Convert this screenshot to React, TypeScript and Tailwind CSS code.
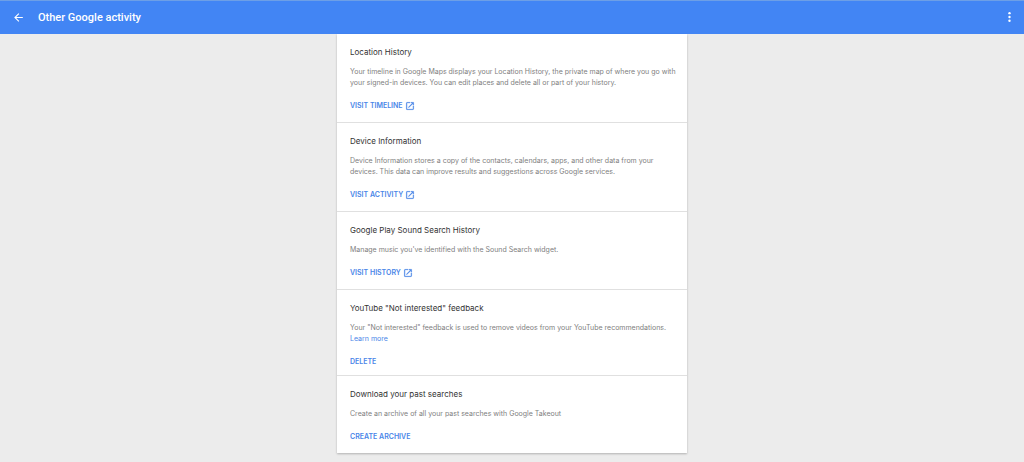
import React from "react";

type Item = {
  title: string;
  text: string;
  action: string;
  external?: boolean;
  learnMore?: boolean;
};

const items: Item[] = [
  {
    title: "Location History",
    text: "Your timeline in Google Maps displays your Location History, the private map of where you go with your signed-in devices. You can edit places and delete all or part of your history.",
    action: "Visit timeline",
    external: true,
  },
  {
    title: "Device Information",
    text: "Device Information stores a copy of the contacts, calendars, apps, and other data from your devices. This data can improve results and suggestions across Google services.",
    action: "Visit activity",
    external: true,
  },
  {
    title: "Google Play Sound Search History",
    text: "Manage music you've identified with the Sound Search widget.",
    action: "Visit history",
    external: true,
  },
  {
    title: 'YouTube "Not interested" feedback',
    text: 'Your "Not interested" feedback is used to remove videos from your YouTube recommendations.',
    action: "Delete",
    learnMore: true,
  },
  {
    title: "Download your past searches",
    text: "Create an archive of all your past searches with Google Takeout",
    action: "Create archive",
  },
];

function OpenInNew() {
  return (
    <svg viewBox="0 0 24 24" className="size-[10px]" fill="currentColor" stroke="currentColor" strokeWidth="0.5" aria-hidden="true">
      <path d="M19 19H5V5h7V3H5a2 2 0 0 0-2 2v14a2 2 0 0 0 2 2h14c1.100 0 2-.9 2-2v-7h-2v7zM14 3v2h3.590l-9.830 9.830 1.410 1.410L19 6.410V10h2V3h-7z" />
    </svg>
  );
}

function ActivityItem({ item }: { item: Item }) {
  const actionClass = "inline-flex h-3 items-center gap-0.5 text-[7px] leading-3 font-semibold uppercase text-[#4a86e8]";
  return (
    <section className={`border-b border-[#e0e0e0] pt-3 pr-2 pl-[13px] last:border-b-0 last:pb-[10px] ${item.external ? "pb-[10px]" : "pb-[7px]"}`}>
      <h2 className="text-[8px] leading-3 text-[#333333]">{item.title}</h2>
      <p className="mt-2 text-[7px] leading-[11px] text-[#808080]">
        {item.text}
        {item.learnMore && <a href="#learn-more" className="block w-fit text-[#4a86e8]">Learn more</a>}
      </p>
      <div className="mt-3 flex">
        {item.external ? (
          <a href="#visit" className={actionClass}>{item.action}<OpenInNew /></a>
        ) : (
          <button type="button" className={actionClass}>{item.action}</button>
        )}
      </div>
    </section>
  );
}

export default function App() {
  return (
    <div className="min-h-screen bg-[#ececec] font-[Inter,Roboto,sans-serif]">
      <header className="flex h-[34px] items-center border-t border-[#6d9fe6] bg-[#4285f4] pr-2 pl-3 text-white">
        <button type="button" aria-label="Back">
          <svg viewBox="0 0 24 24" className="size-[13px]" fill="currentColor">
            <path d="M20 11H7.830l5.590-5.590L12 4l-8 8 8 8 1.410-1.410L7.830 13H20v-2z" />
          </svg>
        </button>
        <h1 className="ml-[13px] flex-1 font-[Roboto,sans-serif] text-[11px] leading-4 font-medium">Other Google activity</h1>
        <button type="button" aria-label="More options">
          <svg viewBox="0 0 24 24" className="size-[13px]" fill="currentColor">
            <circle cx="12" cy="4" r="2.200" /><circle cx="12" cy="11" r="2.200" /><circle cx="12" cy="18" r="2.200" />
          </svg>
        </button>
      </header>
      <main className="mx-auto w-full max-w-[350px] bg-white shadow-[0_1px_2px_rgba(0,0,0,0.25)]">
        {items.map((item) => <ActivityItem key={item.title} item={item} />)}
      </main>
    </div>
  );
}
